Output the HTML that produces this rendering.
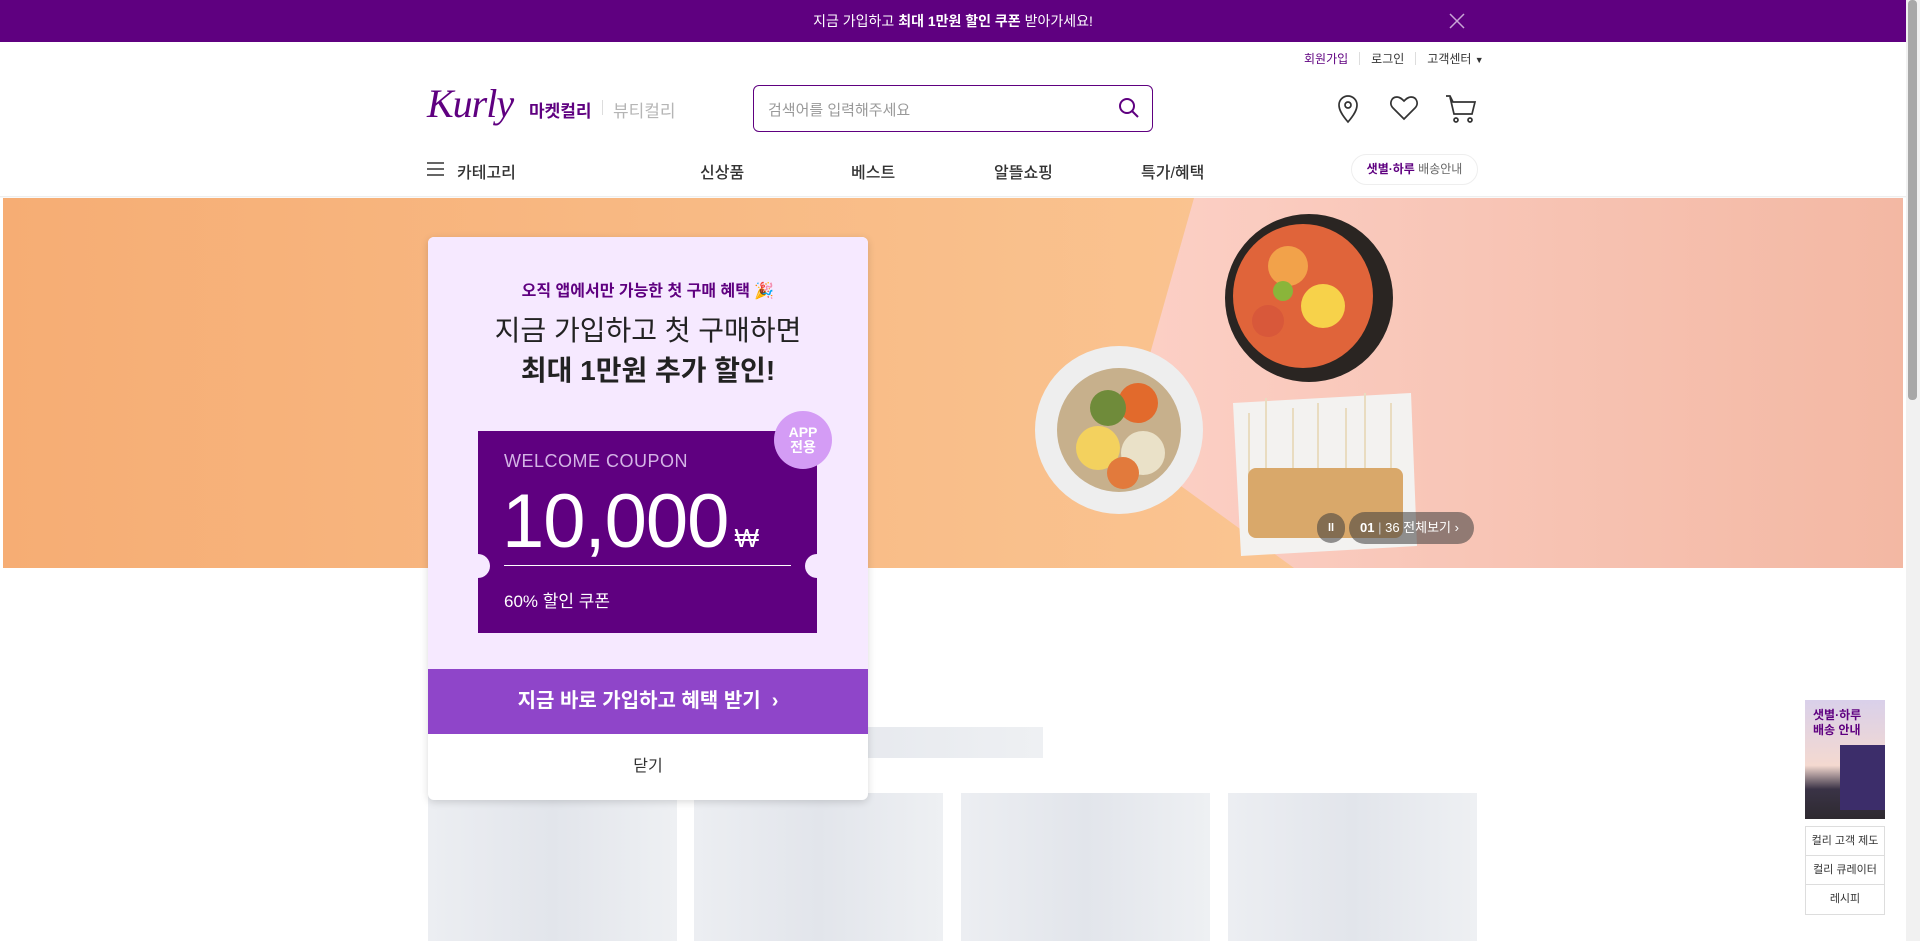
<!DOCTYPE html>
<html><head><meta charset="utf-8"><style>
*{margin:0;padding:0;box-sizing:border-box}
body{width:1920px;height:941px;overflow:hidden;position:relative;background:#fff;font-family:"Liberation Sans","Noto Sans CJK KR",sans-serif;color:#333}
.a{position:absolute}
.sk{background:linear-gradient(90deg,#eceef2,#e2e5eb 50%,#eef0f3)}
.nv{font-size:16px;font-weight:500;color:#333}
</style></head><body>
<div class="a" style="left:0;top:0;width:1906px;height:42px;background:#5f0080;color:#fff;font-size:14px;text-align:center;line-height:42px">지금 가입하고 <b>최대 1만원 할인 쿠폰</b> 받아가세요!</div>
<svg class="a" style="left:1449px;top:13px" width="16" height="16"><path d="M1 1L15 15M15 1L1 15" stroke="#c9a6d6" stroke-width="1.5"/></svg>

<div class="a" style="left:1304px;top:51px;font-size:12px;color:#333;white-space:nowrap;line-height:16px"><span style="color:#5f0080">회원가입</span><span style="display:inline-block;width:1px;height:13px;background:#ddd;margin:0 11px;vertical-align:-2px"></span>로그인<span style="display:inline-block;width:1px;height:13px;background:#ddd;margin:0 11px;vertical-align:-2px"></span>고객센터 <span style="font-size:9px">▼</span></div>

<div class="a" style="left:427px;top:82px;font-family:'Liberation Serif',serif;font-style:italic;font-size:40px;color:#5f0080;letter-spacing:-1px;line-height:44px">Kurly</div>
<div class="a" style="left:529px;top:97px;font-size:17px;font-weight:bold;color:#5f0080">마켓컬리</div>
<div class="a" style="left:602px;top:100px;width:1px;height:15px;background:#ddd"></div>
<div class="a" style="left:613px;top:97px;font-size:17px;color:#b5b5b5">뷰티컬리</div>

<div class="a" style="left:753px;top:85px;width:400px;height:47px;border:1px solid #5f0080;border-radius:6px"></div>
<div class="a" style="left:768px;top:99px;font-size:15px;color:#999">검색어를 입력해주세요</div>
<svg class="a" style="left:1118px;top:97px" width="22" height="22" fill="none" stroke="#5f0080" stroke-width="2"><circle cx="9" cy="9" r="7"/><path d="M14 14L20 20"/></svg>

<svg class="a" style="left:1334px;top:94px" width="28" height="30" fill="none" stroke="#333" stroke-width="1.7"><path d="M14 28C8 21 5 16 5 11a9 9 0 0 1 18 0c0 5-3 10-9 17z"/><circle cx="14" cy="11" r="3"/></svg>
<svg class="a" style="left:1389px;top:94px" width="30" height="28" fill="none" stroke="#333" stroke-width="1.7"><path d="M15 25L4 14C0 10 2 3 8 3c3 0 5 2 7 4 2-2 4-4 7-4 6 0 8 7 4 11z"/></svg>
<svg class="a" style="left:1445px;top:94px" width="32" height="30" fill="none" stroke="#333" stroke-width="1.7"><path d="M1 2h4l3 6h22l-3 12H9L5 3"/><circle cx="11" cy="26" r="2"/><circle cx="25" cy="26" r="2"/></svg>

<svg class="a" style="left:427px;top:161px" width="18" height="16"><path d="M0 2h17M0 8h17M0 14h17" stroke="#333" stroke-width="1.6"/></svg>
<div class="a nv" style="left:457px;top:159px">카테고리</div>
<div class="a nv" style="left:700px;top:159px">신상품</div>
<div class="a nv" style="left:851px;top:159px">베스트</div>
<div class="a nv" style="left:994px;top:159px">알뜰쇼핑</div>
<div class="a nv" style="left:1141px;top:159px">특가/혜택</div>
<div class="a" style="left:1351px;top:154px;width:127px;height:31px;border:1px solid #eee;border-radius:16px;font-size:12px;line-height:29px;text-align:center;color:#666"><b style="color:#5f0080">샛별·하루</b> 배송안내</div>
<div class="a" style="left:0;top:196px;width:1906px;height:2px;background:linear-gradient(#e8e8e8,#fff)"></div>

<svg class="a" style="left:3px;top:198px" width="1900" height="370">
<defs><linearGradient id="o" x1="0" x2="1"><stop offset="0" stop-color="#f6ad74"/><stop offset="1" stop-color="#fcd0a0"/></linearGradient>
<linearGradient id="p" x1="0" x2="1"><stop offset="0" stop-color="#fcd0c6"/><stop offset="1" stop-color="#f3b8a3"/></linearGradient></defs>
<rect width="1900" height="370" fill="url(#o)"/>
<polygon points="1191,0 1900,0 1900,370 1291,370 1160,275 1117,262" fill="url(#p)"/>
<ellipse cx="1306" cy="100" rx="84" ry="84" fill="#2a2522"/>
<ellipse cx="1300" cy="98" rx="70" ry="72" fill="#e0643a"/>
<circle cx="1285" cy="68" r="20" fill="#f2a24a"/><circle cx="1320" cy="108" r="22" fill="#f7d24a"/><circle cx="1265" cy="123" r="16" fill="#d8583a"/><circle cx="1280" cy="93" r="10" fill="#8ab53a"/>
<circle cx="1116" cy="232" r="84" fill="#eeeeee"/><circle cx="1116" cy="232" r="62" fill="#c7b08c"/>
<circle cx="1095" cy="250" r="22" fill="#f3d15e"/><circle cx="1135" cy="205" r="20" fill="#e26a2c"/><circle cx="1140" cy="255" r="22" fill="#eae1c8"/><circle cx="1105" cy="210" r="18" fill="#6f8b3a"/><circle cx="1120" cy="275" r="16" fill="#e27a3c"/>
<polygon points="1230,205 1408,195 1414,348 1238,358" fill="#f3f2f0"/>
<g stroke="#e9dcc0" stroke-width="2"><path d="M1246 215V290M1263 200V300M1290 210V290M1315 205V300M1343 210V290M1362 195V280M1388 205V290"/></g>
<rect x="1245" y="270" width="155" height="70" rx="8" fill="#d9a86a"/>
</svg>
<div class="a" style="left:1317px;top:513px;width:28px;height:30px;border-radius:15px;background:rgba(60,60,60,.55);color:#fff;font-size:11px;text-align:center;line-height:30px;font-weight:bold">ll</div>
<div class="a" style="left:1349px;top:512px;width:125px;height:32px;border-radius:16px;background:rgba(60,60,60,.55);color:#fff;font-size:13px;line-height:32px;padding-left:11px"><b>01</b> <span style="color:#ccc">|</span> 36 전체보기 ›</div>

<div class="a sk" style="left:428px;top:727px;width:615px;height:31px"></div>
<div class="a sk" style="left:428px;top:793px;width:249px;height:148px"></div>
<div class="a sk" style="left:694px;top:793px;width:249px;height:148px"></div>
<div class="a sk" style="left:961px;top:793px;width:249px;height:148px"></div>
<div class="a sk" style="left:1228px;top:793px;width:249px;height:148px"></div>

<div class="a" style="left:428px;top:237px;width:440px;height:563px;border-radius:6px;overflow:hidden;box-shadow:0 2px 8px rgba(0,0,0,.15);background:#fff">
 <div class="a" style="left:0;top:0;width:440px;height:432px;background:#f6e9ff"></div>
 <div class="a" style="left:0;top:40px;width:440px;text-align:center;font-size:16px;font-weight:bold;color:#5f0080">오직 앱에서만 가능한 첫 구매 혜택 🎉</div>
 <div class="a" style="left:0;top:74px;width:440px;text-align:center;font-size:28px;color:#222;line-height:40px">지금 가입하고 첫 구매하면<br><b>최대 1만원 추가 할인!</b></div>
 <div class="a" style="left:50px;top:194px;width:339px;height:202px;background:#5f0080"></div>
 <div class="a" style="left:38px;top:317px;width:24px;height:24px;border-radius:50%;background:#f6e9ff"></div>
 <div class="a" style="left:377px;top:317px;width:24px;height:24px;border-radius:50%;background:#f6e9ff"></div>
 <div class="a" style="left:346px;top:174px;width:58px;height:58px;border-radius:50%;background:#d49cf5;color:#fff;font-weight:bold;font-size:14px;text-align:center;line-height:15px;padding-top:14px">APP<br>전용</div>
 <div class="a" style="left:76px;top:214px;font-size:18px;color:#d4b4e6;letter-spacing:.5px">WELCOME COUPON</div>
 <div class="a" style="left:74px;top:240px;font-size:76px;color:#fff;letter-spacing:-1px;line-height:90px">10,000<span style="font-size:26px;margin-left:6px">₩</span></div>
 <div class="a" style="left:76px;top:328px;width:287px;height:1px;background:#fff"></div>
 <div class="a" style="left:76px;top:350px;font-size:17px;color:#fff">60% 할인 쿠폰</div>
 <div class="a" style="left:0;top:432px;width:440px;height:65px;background:#8f45c9;color:#fff;font-size:20px;font-weight:bold;text-align:center;line-height:65px">지금 바로 가입하고 혜택 받기 &nbsp;›</div>
 <div class="a" style="left:0;top:497px;width:440px;height:66px;text-align:center;line-height:66px;font-size:16px;color:#333">닫기</div>
</div>

<div class="a" style="left:1805px;top:700px;width:80px;height:119px;background:linear-gradient(#d9d0ea,#f4d9d0 55%,#3a3346 75%,#2e2a30)"></div>
<div class="a" style="left:1813px;top:708px;font-size:12px;font-weight:bold;color:#5f0080;line-height:15px">샛별·하루<br>배송 안내</div>
<div class="a" style="left:1840px;top:745px;width:45px;height:65px;background:#3c2d6a"></div>
<div class="a" style="left:1805px;top:826px;width:80px;border:1px solid #ddd;font-size:11px;text-align:center;color:#333">
 <div style="height:29px;line-height:29px;border-bottom:1px solid #ddd">컬리 고객 제도</div>
 <div style="height:29px;line-height:29px;border-bottom:1px solid #ddd">컬리 큐레이터</div>
 <div style="height:29px;line-height:29px">레시피</div>
</div>

<div class="a" style="left:1906px;top:0;width:14px;height:941px;background:#f1f1f1"></div>
<div class="a" style="left:1908px;top:0;width:9px;height:400px;border-radius:4px;background:#a8a8a8"></div>
</body></html>
